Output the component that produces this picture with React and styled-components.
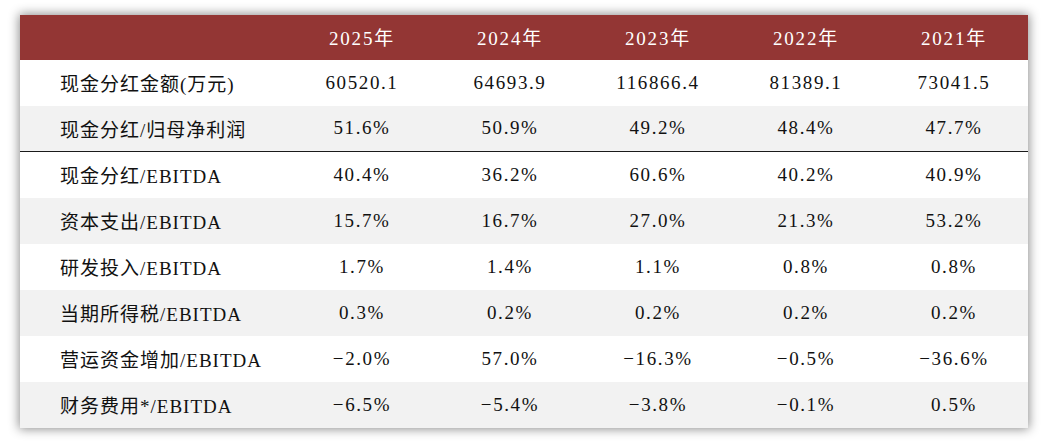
import styled, { createGlobalStyle } from "styled-components";

const GlobalStyle = createGlobalStyle`
  html, body {
    margin: 0;
    padding: 0;
    background: #ffffff;
  }
`;

const years = ["2025年", "2024年", "2023年", "2022年", "2021年"];

const rows = [
  { label: "现金分红金额(万元)", values: ["60520.1", "64693.9", "116866.4", "81389.1", "73041.5"] },
  { label: "现金分红/归母净利润", values: ["51.6%", "50.9%", "49.2%", "48.4%", "47.7%"], divider: true },
  { label: "现金分红/EBITDA", values: ["40.4%", "36.2%", "60.6%", "40.2%", "40.9%"] },
  { label: "资本支出/EBITDA", values: ["15.7%", "16.7%", "27.0%", "21.3%", "53.2%"] },
  { label: "研发投入/EBITDA", values: ["1.7%", "1.4%", "1.1%", "0.8%", "0.8%"] },
  { label: "当期所得税/EBITDA", values: ["0.3%", "0.2%", "0.2%", "0.2%", "0.2%"] },
  { label: "营运资金增加/EBITDA", values: ["-2.0%", "57.0%", "-16.3%", "-0.5%", "-36.6%"] },
  { label: "财务费用*/EBITDA", values: ["-6.5%", "-5.4%", "-3.8%", "-0.1%", "0.5%"] },
];

export default function App() {
  return (
    <Page>
      <GlobalStyle />
      <Table>
        <HeaderRow>
          <LabelCell />
          {years.map((y) => (
            <HeadCell key={y}>{y}</HeadCell>
          ))}
        </HeaderRow>
        {rows.map((row, index) => (
          <Row key={row.label} $shaded={index % 2 === 1} $divider={row.divider}>
            <LabelCell>{row.label}</LabelCell>
            {row.values.map((v, i) => (
              <Cell key={i}>{v.replace("-", "−")}</Cell>
            ))}
          </Row>
        ))}
      </Table>
    </Page>
  );
}

const Page = styled.div`
  padding: 15px 21px 15px 20px;
  width: 1049px;
  box-sizing: border-box;
`;

const Table = styled.div`
  width: 1008px;
  display: flex;
  flex-direction: column;
  background: #ffffff;
  box-shadow: 0 0 10px 1px rgba(0, 0, 0, 0.45);
  font-family: "Liberation Serif", "Noto Sans CJK SC", serif;
  font-size: 19px;
  letter-spacing: 1px;
  color: #111111;
`;

const HeaderRow = styled.div`
  display: grid;
  grid-template-columns: 268px repeat(5, 148px);
  height: 45px;
  padding-bottom: 2px;
  box-sizing: border-box;
  align-items: center;
  background: #933634;
  color: #ffffff;
`;

const Row = styled.div`
  display: grid;
  grid-template-columns: 268px repeat(5, 148px);
  height: 46px;
  padding-bottom: 1px;
  box-sizing: border-box;
  align-items: center;
  background: ${(p) => (p.$shaded ? "#f2f2f2" : "#ffffff")};
  border-bottom: ${(p) => (p.$divider ? "1px solid #1a1a1a" : "none")};
`;

const LabelCell = styled.div`
  padding-left: 40px;
  white-space: nowrap;
`;

const HeadCell = styled.div`
  text-align: center;
  white-space: nowrap;
  letter-spacing: 1.8px;
`;

const Cell = styled.div`
  text-align: center;
  white-space: nowrap;
  letter-spacing: 1.6px;
`;
